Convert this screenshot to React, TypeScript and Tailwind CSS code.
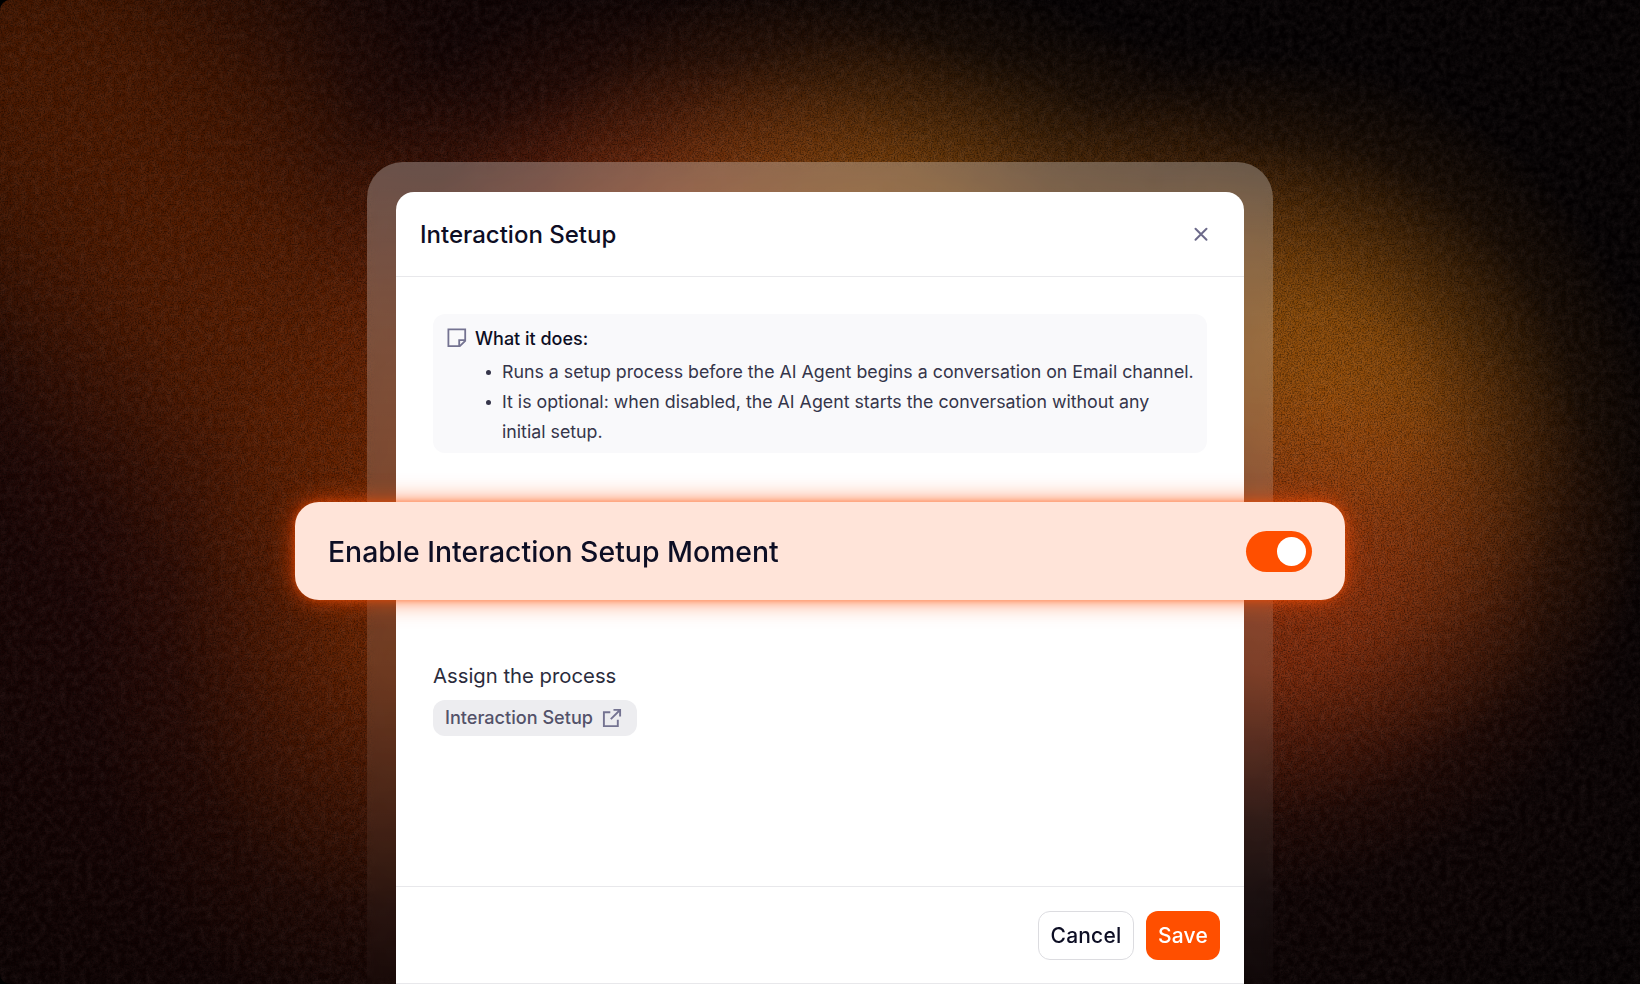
import React, { useState } from 'react';

interface Glow {
  cx: number;
  cy: number;
  rx: number;
  ry: number;
  rotate: number;
  color: string;
  opacity: number;
}

const GLOWS: Glow[] = [
  { cx: 300, cy: 480, rx: 850, ry: 900, rotate: 0, color: '#260705', opacity: 0.85 },
  { cx: 1200, cy: 700, rx: 650, ry: 500, rotate: 0, color: '#1c0605', opacity: 0.7 },
  { cx: 20, cy: 60, rx: 460, ry: 400, rotate: 30, color: '#541d00', opacity: 0.8 },
  { cx: 240, cy: 310, rx: 480, ry: 320, rotate: 50, color: '#5e2000', opacity: 0.85 },
  { cx: 430, cy: 560, rx: 330, ry: 480, rotate: 15, color: '#7e2c00', opacity: 0.85 },
  { cx: 700, cy: 290, rx: 400, ry: 310, rotate: 0, color: '#a83a10', opacity: 0.85 },
  { cx: 920, cy: 250, rx: 390, ry: 280, rotate: 15, color: '#96540c', opacity: 0.8 },
  { cx: 1180, cy: 290, rx: 300, ry: 240, rotate: 35, color: '#70380a', opacity: 0.6 },
  { cx: 1330, cy: 400, rx: 370, ry: 310, rotate: 50, color: '#9c560a', opacity: 0.95 },
  { cx: 1280, cy: 600, rx: 370, ry: 290, rotate: -15, color: '#a0360e', opacity: 0.8 },
];

const BULLETS = [
  'Runs a setup process before the AI Agent begins a conversation on Email channel.',
  'It is optional: when disabled, the AI Agent starts the conversation without any initial setup.',
];

function Backdrop() {
  return (
    <svg className="absolute inset-0 h-full w-full" viewBox="0 0 1640 984" aria-hidden="true">
      <defs>
        {GLOWS.map((g, i) => (
          <radialGradient key={i} id={`glow-${i}`}>
            <stop offset="0" stopColor={g.color} stopOpacity={g.opacity} />
            <stop offset="0.25" stopColor={g.color} stopOpacity={g.opacity * 0.87} />
            <stop offset="0.5" stopColor={g.color} stopOpacity={g.opacity * 0.5} />
            <stop offset="0.75" stopColor={g.color} stopOpacity={g.opacity * 0.14} />
            <stop offset="1" stopColor={g.color} stopOpacity="0" />
          </radialGradient>
        ))}
        <filter id="grain" x="0" y="0" width="100%" height="100%" colorInterpolationFilters="sRGB">
          <feTurbulence type="fractalNoise" baseFrequency="0.7" numOctaves="2" seed="4" />
          <feColorMatrix values="0 0 0 0 0  0 0 0 0 0  0 0 0 0 0  2.4 0 0 0 -0.95" />
        </filter>
        <filter id="mottle" x="0" y="0" width="100%" height="100%" colorInterpolationFilters="sRGB">
          <feTurbulence type="fractalNoise" baseFrequency="0.15" numOctaves="3" seed="9" />
          <feColorMatrix values="0 0 0 0 1  0 0 0 0 0.85  0 0 0 0 0.85  1.4 0 0 0 -0.4" />
        </filter>
      </defs>
      <rect width="1640" height="984" fill="#040102" />
      {GLOWS.map((g, i) => (
        <ellipse
          key={i}
          cx={g.cx}
          cy={g.cy}
          rx={g.rx}
          ry={g.ry}
          fill={`url(#glow-${i})`}
          transform={`rotate(${g.rotate} ${g.cx} ${g.cy})`}
        />
      ))}
      <rect width="1640" height="984" filter="url(#mottle)" opacity="0.08" />
      <rect width="1640" height="984" filter="url(#grain)" opacity="0.45" />
    </svg>
  );
}

function NoteIcon() {
  return (
    <svg className="size-5 shrink-0" viewBox="0 0 20 20" fill="none" stroke="#747391" strokeWidth="1.8">
      <path d="M1.4 1.4h16.8v11.4l-5.4 5.4H1.4z" />
      <path d="M12.2 18v-5.8H18" />
    </svg>
  );
}

function OpenIcon() {
  return (
    <svg className="size-5 shrink-0" viewBox="0 0 20 20" fill="none" stroke="#747391" strokeWidth="1.9">
      <path d="M8.3 4.2H1.9v13.9h13.9v-6.4" />
      <path d="M11.5 1.9h6.6v6.6M18 2 8.8 11.2" />
    </svg>
  );
}

export default function App() {
  const [enabled, setEnabled] = useState(true);

  return (
    <div className="relative h-[984px] w-[1640px] overflow-hidden bg-black font-['Inter',sans-serif]">
      <div className="absolute inset-0 overflow-hidden rounded-l-[10px]">
        <Backdrop />
      </div>

      {/* Frosted frame around the modal */}
      <div className="relative mx-auto mt-[162px] h-[860px] w-[906px] rounded-[36px] bg-gradient-to-b from-white/27 to-white/0 p-[29px] pt-[30px] pb-0 backdrop-blur-[6px]">
        <div className="flex h-[831px] flex-col rounded-t-[18px] bg-white pt-px">
          <header className="flex h-[84px] shrink-0 items-center justify-between border-b border-[#e8e8eb] pr-[35px] pl-6">
            <h1 className="pt-px text-[24px] font-medium text-[#0d0e24]">Interaction Setup</h1>
            <button aria-label="Close">
              <svg className="size-4" viewBox="0 0 16 16" fill="none" stroke="#6c6a8a" strokeWidth="2" strokeLinecap="round">
                <path d="m2.5 1.8 11 11M13.5 1.8l-11 11" />
              </svg>
            </button>
          </header>

          <main className="flex h-[609px] shrink-0 flex-col items-start px-[37px] pt-[37px]">
            <section className="h-[139px] w-full rounded-xl bg-[#f9f9fb] pt-[12px] pl-[14px]">
              <div className="flex h-6 items-center gap-2">
                <NoteIcon />
                <h2 className="text-[18px] font-medium text-[#0d0e24]">What it does:</h2>
              </div>
              <ul className="mt-[7px] pl-[39px] text-[17.8px] leading-[30px] text-[#35354a]">
                {BULLETS.map((text) => (
                  <li key={text} className="flex gap-[11px]">
                    <span className="mt-[13px] size-[5px] shrink-0 rounded-full bg-[#35354a]" />
                    <span className="w-[694px] shrink-0">{text}</span>
                  </li>
                ))}
              </ul>
            </section>

            <p className="mt-[207px] text-[20.3px] leading-8 text-[#2b2c3c]">Assign the process</p>
            <a className="mt-2 flex h-9 w-[204px] items-center gap-[9px] rounded-xl bg-[#ededf0] pl-3 text-[18.1px] font-medium text-[#535269]">
              <span className="whitespace-nowrap">Interaction Setup</span>
              <OpenIcon />
            </a>
          </main>

          <footer className="flex h-[98px] shrink-0 items-center justify-end gap-3 border-y border-[#e8e8eb] pr-6 text-[21px] font-medium">
            <button className="h-[49px] w-24 rounded-xl border border-[#dcdce0] pt-0.5 tracking-[0.2px] text-[#0d0e24]">Cancel</button>
            <button className="h-[49px] w-[74px] rounded-xl bg-[#ff4f00] pt-0.5 tracking-[0.2px] text-white">Save</button>
          </footer>
        </div>
      </div>

      {/* Highlighted setting floating over the modal */}
      <div className="absolute top-[502px] left-[295px] flex h-[98px] w-[1050px] items-center justify-between rounded-3xl bg-[#ffe4d9] px-[33px] shadow-[0_0_7px_rgba(255,79,0,0.5),0_0_24px_rgba(255,79,0,0.7)]">
        <span className="pt-0.5 text-[28.4px] font-medium text-[#0d0e24]">Enable Interaction Setup Moment</span>
        <button
          role="switch"
          aria-checked={enabled}
          onClick={() => setEnabled(!enabled)}
          className={`flex h-[41px] w-[66px] items-center rounded-full px-1.5 ${enabled ? 'justify-end bg-[#ff4f00]' : 'justify-start bg-[#c9c8d2]'}`}
        >
          <span className="size-[29px] rounded-full bg-white" />
        </button>
      </div>
    </div>
  );
}
